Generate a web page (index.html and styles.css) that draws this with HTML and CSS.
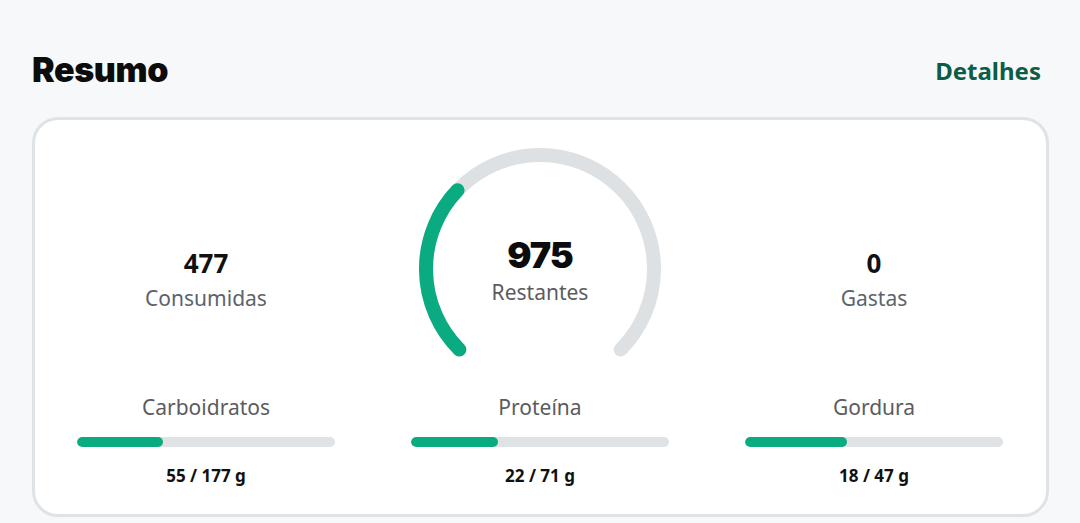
FILE: index.html
```html
<!DOCTYPE html>
<html lang="pt">
<head>
<meta charset="utf-8">
<title>Resumo</title>
<link rel="stylesheet" href="styles.css">
</head>
<body>
<div class="page">
  <header class="header">
    <h1 class="title">Resumo</h1>
    <a class="details" href="#">Detalhes</a>
  </header>
  <section class="card">
    <div class="top-row">
      <div class="stat">
        <div class="stat-value">477</div>
        <div class="stat-label">Consumidas</div>
      </div>
      <div class="gauge">
        <svg class="gauge-svg" width="250" height="212" viewBox="0 0 250 212">
          <path d="M 44.4 202.6 A 114 114 0 1 1 205.6 202.6" fill="none" stroke="#dde1e3" stroke-width="14" stroke-linecap="round"/>
          <path d="M 44.4 202.6 A 114 114 0 0 1 42.6 43.2" fill="none" stroke="#0aab80" stroke-width="14" stroke-linecap="round"/>
        </svg>
        <div class="gauge-text">
          <div class="gauge-value">975</div>
          <div class="gauge-label">Restantes</div>
        </div>
      </div>
      <div class="stat">
        <div class="stat-value">0</div>
        <div class="stat-label">Gastas</div>
      </div>
    </div>
    <div class="macro-row">
      <div class="macro">
        <div class="macro-label">Carboidratos</div>
        <div class="bar"><div class="bar-fill" style="width:86px"></div></div>
        <div class="macro-value">55 / 177 g</div>
      </div>
      <div class="macro">
        <div class="macro-label">Proteína</div>
        <div class="bar"><div class="bar-fill" style="width:87px"></div></div>
        <div class="macro-value">22 / 71 g</div>
      </div>
      <div class="macro">
        <div class="macro-label">Gordura</div>
        <div class="bar"><div class="bar-fill" style="width:102px"></div></div>
        <div class="macro-value">18 / 47 g</div>
      </div>
    </div>
  </section>
</div>
</body>
</html>
```
FILE: styles.css
```css
* { box-sizing: border-box; }
html, body { margin: 0; padding: 0; }
body {
  background: #f7f8fa;
  font-family: "Noto Sans", "Open Sans", sans-serif;
  color: #111;
  width: 1080px;
  height: 523px;
  overflow: hidden;
}
.page {
  padding: 50px 31px 0 32px;
}
.header {
  display: flex;
  justify-content: space-between;
  align-items: flex-start;
  padding-right: 8px;
  height: 40px;
}
.title {
  margin: 0;
  font-family: "Inter", sans-serif;
  font-weight: 900;
  font-size: 34px;
  line-height: 40px;
  letter-spacing: -0.4px;
  color: #0c0c0c;
}
.details {
  margin-top: 5px;
  font-size: 24px;
  line-height: 32px;
  font-weight: 700;
  color: #0d5c45;
  text-decoration: none;
}
.card {
  margin-top: 27px;
  background: #fff;
  border: 3px solid #dfe3e5;
  border-radius: 26px;
  padding: 27px 43px 27px 42px;
}
.top-row, .macro-row {
  display: grid;
  grid-template-columns: 258px 258px 258px;
  column-gap: 76px;
}
.stat {
  padding-top: 100px;
  display: flex;
  flex-direction: column;
  align-items: center;
}
.stat-value {
  font-size: 26px;
  line-height: 32px;
  font-weight: 700;
  color: #111;
}
.stat-label {
  margin-top: 5px;
  font-size: 21px;
  line-height: 28px;
  color: #5d636b;
}
.gauge {
  position: relative;
  height: 212px;
  display: flex;
  justify-content: center;
}
.gauge-svg { display: block; }
.gauge-text {
  position: absolute;
  top: 90px;
  left: 0;
  right: 0;
  display: flex;
  flex-direction: column;
  align-items: center;
}
.gauge-value {
  font-family: "Inter", sans-serif;
  font-weight: 900;
  font-size: 36px;
  line-height: 36px;
  letter-spacing: -1px;
  color: #0c0c0c;
}
.gauge-label {
  margin-top: 5px;
  font-size: 21px;
  line-height: 28px;
  color: #5a5c5e;
}
.macro-row {
  margin-top: 34px;
}
.macro {
  display: flex;
  flex-direction: column;
  align-items: center;
}
.macro-label {
  font-size: 21px;
  line-height: 28px;
  color: #5a5c5e;
}
.bar {
  margin-top: 16px;
  width: 100%;
  height: 10px;
  border-radius: 5px;
  background: #dfe3e5;
  overflow: hidden;
}
.bar-fill {
  height: 100%;
  border-radius: 5px;
  background: #0aab80;
}
.macro-value {
  margin-top: 18px;
  font-size: 17px;
  line-height: 22px;
  font-weight: 700;
  color: #111;
}
```
